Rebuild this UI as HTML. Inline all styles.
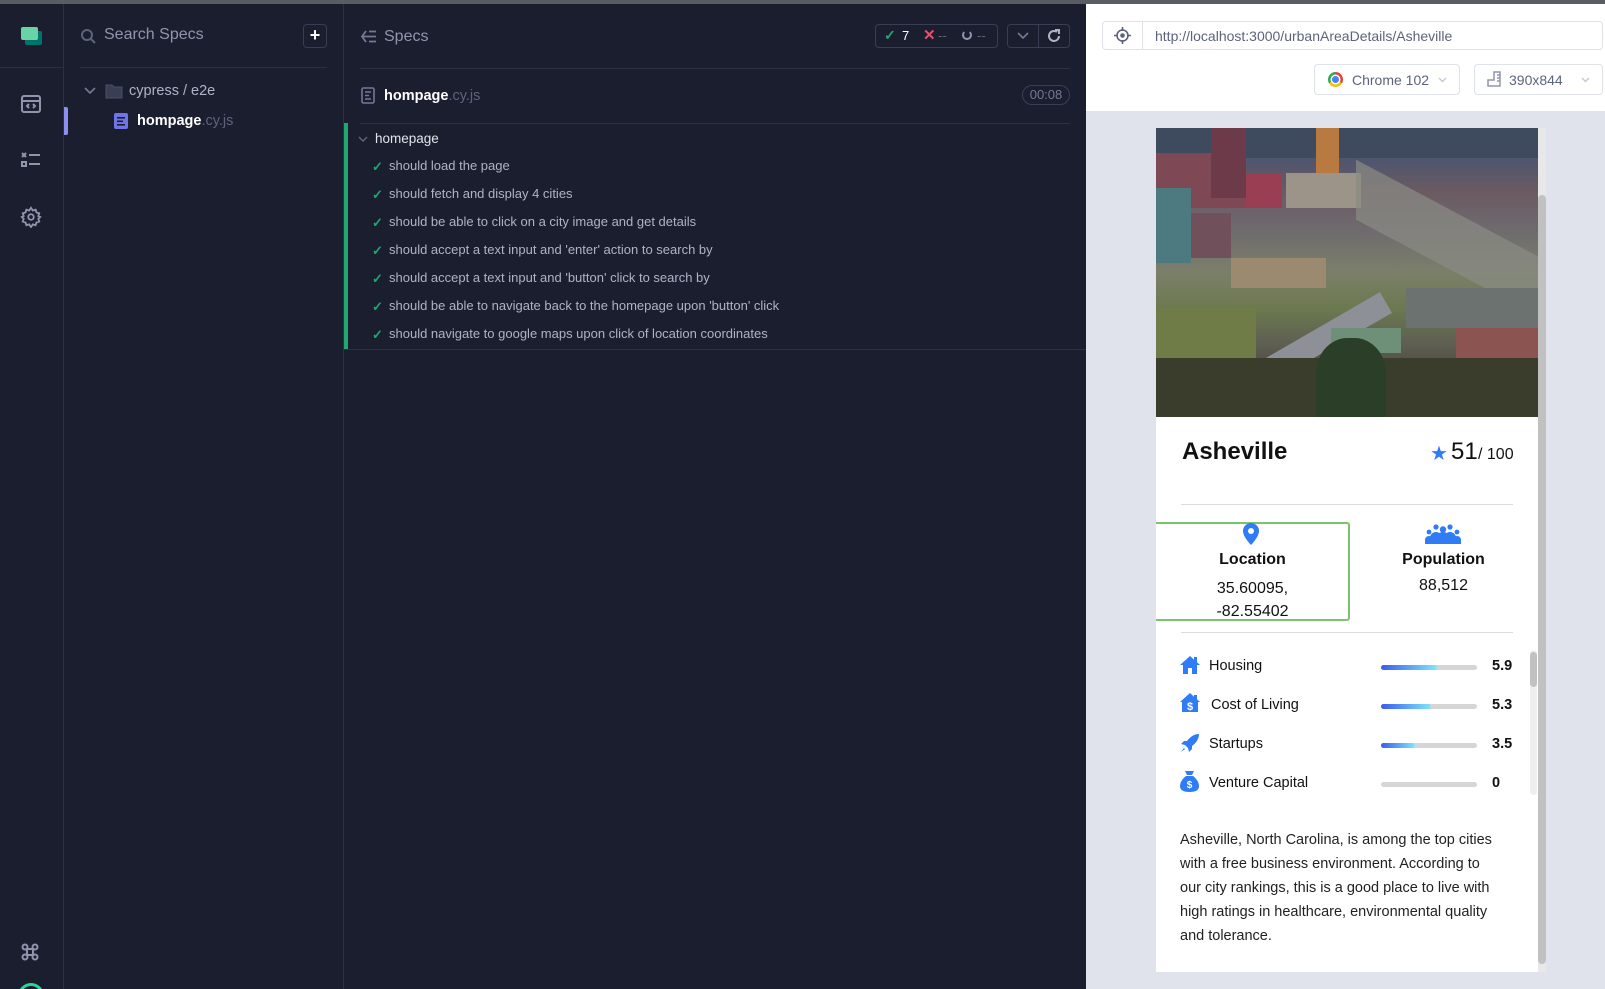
<!DOCTYPE html>
<html><head><meta charset="utf-8"><style>
*{box-sizing:border-box;margin:0;padding:0}
html,body{width:1605px;height:989px;overflow:hidden}
body{background:#1b1e2e;font-family:"Liberation Sans",sans-serif}
#w{position:relative;width:1605px;height:989px;overflow:hidden}
.a{position:absolute}
.topline{left:0;top:0;width:1605px;height:4px;background:#5a5c63}
.vb{background:#2c3044}
.t{color:#afb3c7;font-size:13px;white-space:nowrap}
.ck{color:#1fa971;font-size:13px;font-weight:bold}
.bar{height:5px;border-radius:3px;background:#d6d6d6;width:96px}
.bar i{display:block;height:5px;border-radius:3px;background:linear-gradient(90deg,#3b5bef,#7ee6f8)}
</style></head><body><div id="w">
<div class="a topline"></div>
<div class="a vb" style="left:63px;top:4px;width:1px;height:985px"></div>
<div class="a vb" style="left:0;top:67px;width:63px;height:1px"></div>
<div class="a" style="left:25px;top:31px;width:17px;height:14px;background:#00736a;border-radius:2px"></div>
<div class="a" style="left:21px;top:27px;width:17px;height:13px;background:#69d3a7;border-radius:2px"></div>
<svg class="a" style="left:20px;top:94px" width="22" height="20" viewBox="0 0 22 20" fill="none" stroke="#9095ad" stroke-width="2"><rect x="2" y="2" width="18" height="16" rx="2"/><line x1="2" y1="7" x2="20" y2="7"/><path d="M9 10l-2 2 2 2M13 10l2 2-2 2"/></svg>
<svg class="a" style="left:20px;top:151px" width="22" height="18" viewBox="0 0 22 18" stroke="#9095ad" stroke-width="2" fill="none"><path d="M2 2l4 4M6 2l-4 4"/><rect x="2" y="11" width="4" height="4"/><line x1="9" y1="4" x2="20" y2="4"/><line x1="9" y1="13" x2="20" y2="13"/></svg>
<svg class="a" style="left:20px;top:206px" width="22" height="22" viewBox="0 0 24 24" fill="none" stroke="#9095ad" stroke-width="2"><circle cx="12" cy="12" r="3"/><path d="M12 2l2 3 3-1 1 3 3 1-1 3 2 1-2 2 1 3-3 1-1 3-3-1-2 3-2-3-3 1-1-3-3-1 1-3-2-2 2-1-1-3 3-1 1-3 3 1z"/></svg>
<svg class="a" style="left:21px;top:943px" width="18" height="18" viewBox="0 0 18 18" fill="none" stroke="#9095ad" stroke-width="2"><path d="M6 6h6v6H6z"/><circle cx="4" cy="4" r="2.5"/><circle cx="14" cy="4" r="2.5"/><circle cx="4" cy="14" r="2.5"/><circle cx="14" cy="14" r="2.5"/></svg>
<div class="a" style="left:18px;top:983px;width:26px;height:26px;border:3px solid #2ad49a;border-radius:50%"></div>
<div class="a" style="left:64px;top:107px;width:4px;height:28px;background:#8b90f0;border-radius:0 2px 2px 0"></div>
<div class="a vb" style="left:343px;top:4px;width:1px;height:985px"></div>
<svg class="a" style="left:80px;top:28px" width="16" height="16" viewBox="0 0 16 16" fill="none" stroke="#5e637d" stroke-width="2"><circle cx="7" cy="7" r="5"/><line x1="11" y1="11" x2="15" y2="15"/></svg>
<div class="a" style="left:104px;top:26px;font-size:16px;color:#9095ad">Search Specs</div>
<div class="a" style="left:303px;top:24px;width:24px;height:24px;border:1px solid #3a3e55;border-radius:4px;color:#fff;font-size:18px;font-weight:bold;text-align:center;line-height:21px">+</div>
<div class="a vb" style="left:80px;top:67px;width:247px;height:1px"></div>
<svg class="a" style="left:84px;top:87px" width="12" height="8" viewBox="0 0 12 8" fill="none" stroke="#747994" stroke-width="1.6"><path d="M1 1l5 5 5-5"/></svg>
<svg class="a" style="left:105px;top:84px" width="18" height="15" viewBox="0 0 18 15"><path d="M1 1h6l2 2h8v11H1z" fill="#3a3e55" stroke="#4a4f69"/></svg>
<div class="a" style="left:129px;top:83px;font-size:14.5px;color:#afb3c7">cypress / e2e</div>
<svg class="a" style="left:114px;top:113px" width="14" height="16" viewBox="0 0 14 16"><rect x="0" y="0" width="14" height="16" rx="2" fill="#6f75e6"/><rect x="3" y="4" width="8" height="1.6" fill="#1b1e2e"/><rect x="3" y="7.5" width="6" height="1.6" fill="#1b1e2e"/><rect x="3" y="11" width="8" height="1.6" fill="#1b1e2e"/></svg>
<div class="a" style="left:137px;top:113px;font-size:14.5px;color:#fff;font-weight:bold">hompage<span style="color:#5e637d;font-weight:normal">.cy.js</span></div>
<svg class="a" style="left:361px;top:30px" width="16" height="13" viewBox="0 0 16 13" fill="none" stroke="#747994" stroke-width="1.8"><path d="M5 1L1 6.5 5 12M1 6.5h14M8 1.5h7M8 11.5h7"/></svg>
<div class="a" style="left:384px;top:28px;font-size:16px;color:#9095ad">Specs</div>
<div class="a" style="left:875px;top:24px;width:123px;height:24px;border:1px solid #3a3e55;border-radius:4px"></div>
<div class="a ck" style="left:884px;top:27px;font-size:14px">✓</div>
<div class="a" style="left:902px;top:28px;font-size:13px;color:#fff">7</div>
<div class="a" style="left:923px;top:26px;font-size:15px;color:#e0526e;font-weight:bold">✕</div>
<div class="a" style="left:938px;top:28px;font-size:13px;color:#5e637d">--</div>
<div class="a" style="left:962px;top:30px;width:10px;height:10px;border:2px solid #9095ad;border-top-color:transparent;border-radius:50%"></div>
<div class="a" style="left:977px;top:28px;font-size:13px;color:#5e637d">--</div>
<div class="a" style="left:1007px;top:24px;width:63px;height:24px;border:1px solid #3a3e55;border-radius:4px"></div>
<div class="a" style="left:1038px;top:24px;width:1px;height:24px;background:#3a3e55"></div>
<svg class="a" style="left:1017px;top:32px" width="12" height="8" viewBox="0 0 12 8" fill="none" stroke="#747994" stroke-width="1.6"><path d="M1 1l5 5 5-5"/></svg>
<svg class="a" style="left:1046px;top:28px" width="16" height="16" viewBox="0 0 16 16" fill="none" stroke="#afb3c7" stroke-width="2"><path d="M13 8a5 5 0 1 1-2-4"/><path d="M9 2h4v4" /></svg>
<div class="a vb" style="left:360px;top:68px;width:710px;height:1px"></div>
<svg class="a" style="left:361px;top:87px" width="14" height="17" viewBox="0 0 14 17" fill="none" stroke="#747994" stroke-width="1.6"><rect x="1" y="1" width="12" height="15" rx="1.5"/><path d="M4 5h6M4 8.5h4M4 12h6"/></svg>
<div class="a" style="left:384px;top:88px;font-size:14.5px;color:#fff;font-weight:bold">hompage<span style="color:#5e637d;font-weight:normal">.cy.js</span></div>
<div class="a" style="left:1022px;top:85px;width:48px;height:20px;border:1px solid #3a3e55;border-radius:10px;color:#747994;font-size:13px;text-align:center;line-height:18px">00:08</div>
<div class="a vb" style="left:360px;top:123px;width:710px;height:1px"></div>
<div class="a" style="left:344px;top:123px;width:4px;height:226px;background:#1fa971"></div>
<div class="a vb" style="left:344px;top:349px;width:742px;height:1px"></div>
<svg class="a" style="left:358px;top:136px" width="10" height="6" viewBox="0 0 10 6" fill="none" stroke="#5e637d" stroke-width="1.5"><path d="M1 1l4 4 4-4"/></svg>
<div class="a" style="left:375px;top:131px;font-size:13.5px;color:#e1e3ed">homepage</div>
<div class="a" style="left:372px;top:158px">
<div style="position:relative;height:28px"><span class="a ck" style="left:0;top:1px">✓</span><span class="a t" style="left:17px;top:0">should load the page</span></div>
<div style="position:relative;height:28px"><span class="a ck" style="left:0;top:1px">✓</span><span class="a t" style="left:17px;top:0">should fetch and display 4 cities</span></div>
<div style="position:relative;height:28px"><span class="a ck" style="left:0;top:1px">✓</span><span class="a t" style="left:17px;top:0">should be able to click on a city image and get details</span></div>
<div style="position:relative;height:28px"><span class="a ck" style="left:0;top:1px">✓</span><span class="a t" style="left:17px;top:0">should accept a text input and 'enter' action to search by</span></div>
<div style="position:relative;height:28px"><span class="a ck" style="left:0;top:1px">✓</span><span class="a t" style="left:17px;top:0">should accept a text input and 'button' click to search by</span></div>
<div style="position:relative;height:28px"><span class="a ck" style="left:0;top:1px">✓</span><span class="a t" style="left:17px;top:0">should be able to navigate back to the homepage upon 'button' click</span></div>
<div style="position:relative;height:28px"><span class="a ck" style="left:0;top:1px">✓</span><span class="a t" style="left:17px;top:0">should navigate to google maps upon click of location coordinates</span></div>
</div>
<div class="a" style="left:1086px;top:4px;width:519px;height:985px;background:#e1e3ec"></div>
<div class="a" style="left:1086px;top:4px;width:519px;height:107px;background:#fff"></div>
<div class="a" style="left:1102px;top:21px;width:501px;height:29px;border:1px solid #dfe1eb;border-radius:4px"></div>
<div class="a" style="left:1142px;top:21px;width:1px;height:29px;background:#dfe1eb"></div>
<svg class="a" style="left:1114px;top:27px" width="17" height="17" viewBox="0 0 17 17" fill="none" stroke="#5e637d" stroke-width="1.6"><circle cx="8.5" cy="8.5" r="5.5"/><circle cx="8.5" cy="8.5" r="1.5" fill="#5e637d"/><path d="M8.5 0v4M8.5 13v4M0 8.5h4M13 8.5h4"/></svg>
<div class="a" style="left:1155px;top:28px;font-size:14px;color:#5e637d">http://localhost:3000/urbanAreaDetails/Asheville</div>
<div class="a" style="left:1314px;top:64px;width:146px;height:31px;border:1px solid #dfe1eb;border-radius:4px"></div>
<div class="a" style="left:1328px;top:72px;width:15px;height:15px;border-radius:50%;background:conic-gradient(#e94235 0 120deg,#fbbc05 120deg 240deg,#34a853 240deg)"></div>
<div class="a" style="left:1332px;top:76px;width:7px;height:7px;border-radius:50%;background:#4285f4;box-shadow:0 0 0 1.5px #fff"></div>
<div class="a" style="left:1352px;top:72px;font-size:14px;color:#5e637d">Chrome 102</div>
<svg class="a" style="left:1438px;top:77px" width="9" height="6" viewBox="0 0 9 6" fill="none" stroke="#c4c7d4" stroke-width="1.4"><path d="M1 1l3.5 3.5L8 1"/></svg>
<div class="a" style="left:1474px;top:64px;width:129px;height:31px;border:1px solid #dfe1eb;border-radius:4px"></div>
<svg class="a" style="left:1487px;top:71px" width="16" height="16" viewBox="0 0 16 16" fill="none" stroke="#9095ad" stroke-width="1.5"><path d="M1 15V9h6V1h6v14z"/><path d="M10 4h3M10 7h3M10 10h3"/></svg>
<div class="a" style="left:1509px;top:72px;font-size:14px;color:#5e637d">390x844</div>
<svg class="a" style="left:1581px;top:77px" width="9" height="6" viewBox="0 0 9 6" fill="none" stroke="#c4c7d4" stroke-width="1.4"><path d="M1 1l3.5 3.5L8 1"/></svg>
<div class="a" style="left:1156px;top:128px;width:390px;height:844px;background:#fff"></div>
<div class="a" style="left:1538px;top:128px;width:8px;height:844px;background:#e8e8e8"></div>
<div class="a" style="left:1538px;top:195px;width:8px;height:769px;background:#c1c1c1;border-radius:4px"></div>
<div class="a" style="left:1156px;top:128px;width:382px;height:289px;overflow:hidden;background:linear-gradient(180deg,#3c4a62 0%,#4c5570 10%,#6b5a62 22%,#6e6a6e 35%,#7b7f6a 50%,#6c7a50 62%,#5e5e52 75%,#4a4438 88%,#3c3a30 100%)">
 <div class="a" style="left:0;top:0;width:382px;height:30px;background:#3e4a5e"></div>
 <div class="a" style="left:0;top:25px;width:90px;height:55px;background:#7e4854"></div>
 <div class="a" style="left:55px;top:0;width:35px;height:70px;background:#6c3a48"></div>
 <div class="a" style="left:90px;top:45px;width:36px;height:35px;background:#9a3e54"></div>
 <div class="a" style="left:130px;top:45px;width:75px;height:35px;background:#9c9488"></div>
 <div class="a" style="left:160px;top:0;width:23px;height:45px;background:#b87a40"></div>
 <div class="a" style="left:0;top:60px;width:35px;height:75px;background:#4d7a80"></div>
 <div class="a" style="left:35px;top:85px;width:40px;height:45px;background:#70505a"></div>
 <div class="a" style="left:75px;top:130px;width:95px;height:30px;background:#9c8a70"></div>
 <div class="a" style="left:200px;top:80px;width:182px;height:60px;background:#8a8c84;transform:skewY(28deg);opacity:.7"></div>
 <div class="a" style="left:90px;top:200px;width:150px;height:24px;background:#8d9096;transform:rotate(-30deg)"></div>
 <div class="a" style="left:0;top:180px;width:100px;height:50px;background:#6f7c48"></div>
 <div class="a" style="left:250px;top:160px;width:132px;height:40px;background:#6c7270"></div>
 <div class="a" style="left:300px;top:200px;width:82px;height:30px;background:#8c5450"></div>
 <div class="a" style="left:175px;top:200px;width:70px;height:25px;background:#6e9078"></div>
 <div class="a" style="left:0;top:230px;width:382px;height:59px;background:#3a3c2c"></div>
 <div class="a" style="left:160px;top:210px;width:70px;height:79px;background:#2a3e28;border-radius:45% 45% 0 0"></div>
</div>
<div class="a" style="left:1182px;top:438px;font-size:24px;font-weight:bold;color:#111">Asheville</div>
<div class="a" style="left:1430px;top:441px;font-size:20px;color:#2f7cf6">★</div>
<div class="a" style="left:1451px;top:438px;font-size:24px;color:#111">51</div>
<div class="a" style="left:1478px;top:446px;font-size:16px;color:#111">/ 100</div>
<div class="a" style="left:1181px;top:504px;width:332px;height:1px;background:#dcdcdc"></div>
<div class="a" style="left:1156px;top:522px;width:194px;height:99px;border:2px solid #7dc36b;border-left:none;border-radius:0 3px 3px 0"></div>
<svg class="a" style="left:1243px;top:523px" width="16" height="22" viewBox="0 0 16 22"><path d="M8 0a8 8 0 0 0-8 8c0 6 8 14 8 14s8-8 8-14a8 8 0 0 0-8-8z" fill="#2f7cf6"/><circle cx="8" cy="8" r="3" fill="#fff"/></svg>
<div class="a" style="left:1156px;top:551px;width:193px;text-align:center;font-size:16px;font-weight:bold;color:#111">Location</div>
<div class="a" style="left:1156px;top:577px;width:193px;text-align:center;font-size:16px;color:#111;line-height:23px">35.60095,<br>-82.55402</div>
<svg class="a" style="left:1425px;top:524px" width="36" height="20" viewBox="0 0 36 20" fill="#2f7cf6"><circle cx="11" cy="3" r="2.6"/><circle cx="25" cy="3" r="2.6"/><circle cx="18" cy="5.5" r="3.2"/><circle cx="4" cy="8" r="2.4"/><circle cx="32" cy="8" r="2.4"/><path d="M0 20v-4a4 4 0 0 1 8 0v4zM28 20v-4a4 4 0 0 1 8 0v4zM5 20v-6a6 6 0 0 1 12 0v6zM19 20v-6a6 6 0 0 1 12 0v6zM11 20v-5a7 7 0 0 1 14 0v5z"/></svg>
<div class="a" style="left:1349px;top:551px;width:189px;text-align:center;font-size:16px;font-weight:bold;color:#111">Population</div>
<div class="a" style="left:1349px;top:577px;width:189px;text-align:center;font-size:16px;color:#111">88,512</div>
<div class="a" style="left:1181px;top:632px;width:332px;height:1px;background:#dcdcdc"></div>
<div class="a" style="left:1530px;top:650px;width:7px;height:145px;background:#efefef;border-radius:4px"></div>
<div class="a" style="left:1530px;top:652px;width:7px;height:35px;background:#c1c1c1;border-radius:4px"></div>
<svg class="a" style="left:1180px;top:655px" width="20" height="20" viewBox="0 0 20 20" fill="#2f7cf6"><path d="M10 1L0 10h3v9h5v-6h4v6h5v-9h3l-3-2.7V2h-3v2.6z"/></svg>
<div class="a" style="left:1209px;top:658px;font-size:14.5px;color:#111">Housing</div>
<div class="a bar" style="left:1381px;top:665px"><i style="width:56px"></i></div>
<div class="a" style="left:1492px;top:658px;font-size:14.5px;font-weight:bold;color:#111">5.9</div>
<svg class="a" style="left:1180px;top:692px" width="20" height="21" viewBox="0 0 20 21" fill="#2f7cf6"><path d="M10 1L0 10h2v10h16V10h2l-3-2.7V3h-3v1.7z"/><text x="10" y="18" text-anchor="middle" font-size="11" font-weight="bold" fill="#fff" font-family="Liberation Sans">$</text></svg>
<div class="a" style="left:1211px;top:697px;font-size:14.5px;color:#111">Cost of Living</div>
<div class="a bar" style="left:1381px;top:704px"><i style="width:50px"></i></div>
<div class="a" style="left:1492px;top:697px;font-size:14.5px;font-weight:bold;color:#111">5.3</div>
<svg class="a" style="left:1180px;top:733px" width="20" height="20" viewBox="0 0 20 20" fill="#2f7cf6"><path d="M19 1c-5 0-9 3-12 7l-3 0-3 3 4 1 3 3 1 4 3-3v-3c4-3 7-7 7-12z"/><path d="M4 15l-3 4 4-3z"/></svg>
<div class="a" style="left:1209px;top:736px;font-size:14.5px;color:#111">Startups</div>
<div class="a bar" style="left:1381px;top:743px"><i style="width:34px"></i></div>
<div class="a" style="left:1492px;top:736px;font-size:14.5px;font-weight:bold;color:#111">3.5</div>
<svg class="a" style="left:1180px;top:771px" width="19" height="21" viewBox="0 0 19 21" fill="#2f7cf6"><path d="M5 0h9l-2 4H7z"/><path d="M6 5h7c4 3 6 7 6 10 0 4-3 6-9.5 6S0 19 0 15c0-3 2-7 6-10z"/><text x="9.5" y="17" text-anchor="middle" font-size="10" font-weight="bold" fill="#fff" font-family="Liberation Sans">$</text></svg>
<div class="a" style="left:1209px;top:775px;font-size:14.5px;color:#111">Venture Capital</div>
<div class="a bar" style="left:1381px;top:782px"></div>
<div class="a" style="left:1492px;top:775px;font-size:14.5px;font-weight:bold;color:#111">0</div>
<div class="a" style="left:1180px;top:828px;width:319px;font-size:14.5px;line-height:24px;color:#222">Asheville, North Carolina, is among the top cities with a free business environment. According to our city rankings, this is a good place to live with high ratings in healthcare, environmental quality and tolerance.</div>
</div></body></html>
